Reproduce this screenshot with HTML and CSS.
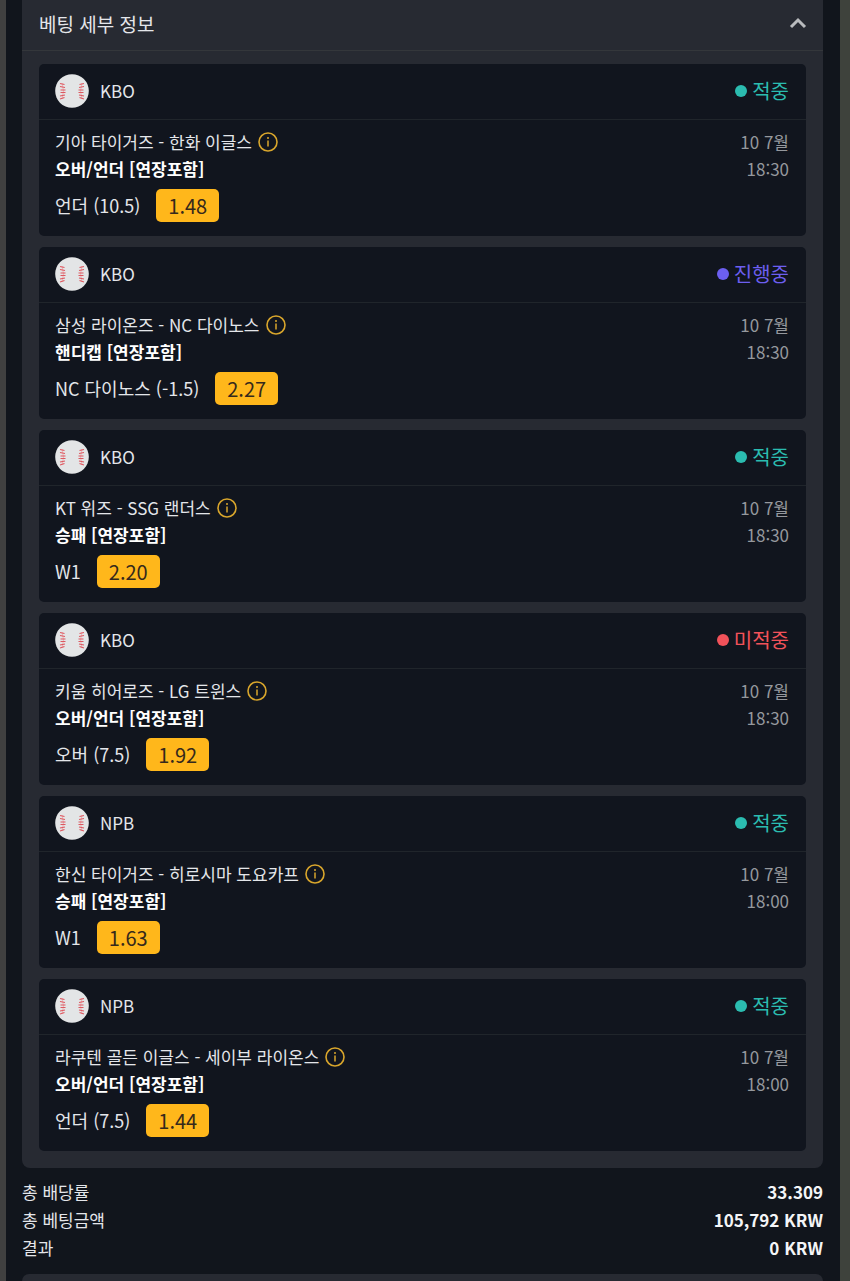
FILE: index.html
```
<!DOCTYPE html>
<html lang="ko">
<head>
  <meta charset="UTF-8" />
  <meta name="viewport" content="width=device-width, initial-scale=1.0"/>
  <title>베팅 세부 정보</title>
  <link rel="stylesheet" href="styles.css">
</head>
<body>
  <svg class="sprite" aria-hidden="true">
    <symbol id="ball" viewBox="0 0 34 34">
      <circle cx="17" cy="17" r="16.8" fill="#e3e5e6"/>
      <g fill="none" stroke="#f0b4b8" stroke-width="1">
        <path d="M7 9Q10 17 7 25M27 9Q24 17 27 25"/>
      </g>
      <g fill="none" stroke="#dc5960" stroke-width="1.2">
        <path d="M5 9.500l4.500 1M5 12.500l5 1M5.500 16h5M5.500 18.500h5M5 22l5-1M5 25l4.500-1.500"/>
        <path d="M29 9.500l-4.500 1M29 12.500l-5 1M28.500 16h-5M28.500 18.500h-5M29 22l-5-1M29 25l-4.500-1.500"/>
      </g>
    </symbol>
    <symbol id="info" viewBox="0 0 20 20">
      <circle cx="10" cy="10" r="9" fill="none" stroke="#d9a62c" stroke-width="1.600"/>
      <path d="M10 8.600v6" stroke="#d9a62c" stroke-width="1.500"/>
      <circle cx="10" cy="6" r="1" fill="#d9a62c"/>
    </symbol>
  </svg>

  <div class="sheet">
    <section class="panel">
      <button class="panel-toggle" type="button" aria-expanded="true" aria-controls="bets">
        <span>베팅 세부 정보</span>
        <svg class="chevron" viewBox="0 0 18 12" aria-hidden="true"><path d="M2 10l7-7 7 7"/></svg>
      </button>

      <div class="bets" id="bets">
        <article class="bet">
          <header class="bet-head">
            <svg class="ball" aria-hidden="true"><use href="#ball"/></svg>
            <span class="league">KBO</span>
            <span class="status won">적중</span>
          </header>
          <div class="bet-body">
            <div class="info">
              <div class="match">기아 타이거즈 - 한화 이글스
                <button class="info-btn" type="button" aria-label="경기 정보"><svg><use href="#info"/></svg></button>
              </div>
              <div class="market">오버/언더 [연장포함]</div>
              <div class="pick">언더 (10.5) <span class="odds">1.48</span></div>
            </div>
            <div class="date">10 7월<br>18:30</div>
          </div>
        </article>

        <article class="bet">
          <header class="bet-head">
            <svg class="ball" aria-hidden="true"><use href="#ball"/></svg>
            <span class="league">KBO</span>
            <span class="status live">진행중</span>
          </header>
          <div class="bet-body">
            <div class="info">
              <div class="match">삼성 라이온즈 - NC 다이노스
                <button class="info-btn" type="button" aria-label="경기 정보"><svg><use href="#info"/></svg></button>
              </div>
              <div class="market">핸디캡 [연장포함]</div>
              <div class="pick">NC 다이노스 (-1.5) <span class="odds">2.27</span></div>
            </div>
            <div class="date">10 7월<br>18:30</div>
          </div>
        </article>

        <article class="bet">
          <header class="bet-head">
            <svg class="ball" aria-hidden="true"><use href="#ball"/></svg>
            <span class="league">KBO</span>
            <span class="status won">적중</span>
          </header>
          <div class="bet-body">
            <div class="info">
              <div class="match">KT 위즈 - SSG 랜더스
                <button class="info-btn" type="button" aria-label="경기 정보"><svg><use href="#info"/></svg></button>
              </div>
              <div class="market">승패 [연장포함]</div>
              <div class="pick">W1 <span class="odds">2.20</span></div>
            </div>
            <div class="date">10 7월<br>18:30</div>
          </div>
        </article>

        <article class="bet">
          <header class="bet-head">
            <svg class="ball" aria-hidden="true"><use href="#ball"/></svg>
            <span class="league">KBO</span>
            <span class="status lost">미적중</span>
          </header>
          <div class="bet-body">
            <div class="info">
              <div class="match">키움 히어로즈 - LG 트윈스
                <button class="info-btn" type="button" aria-label="경기 정보"><svg><use href="#info"/></svg></button>
              </div>
              <div class="market">오버/언더 [연장포함]</div>
              <div class="pick">오버 (7.5) <span class="odds">1.92</span></div>
            </div>
            <div class="date">10 7월<br>18:30</div>
          </div>
        </article>

        <article class="bet">
          <header class="bet-head">
            <svg class="ball" aria-hidden="true"><use href="#ball"/></svg>
            <span class="league">NPB</span>
            <span class="status won">적중</span>
          </header>
          <div class="bet-body">
            <div class="info">
              <div class="match">한신 타이거즈 - 히로시마 도요카프
                <button class="info-btn" type="button" aria-label="경기 정보"><svg><use href="#info"/></svg></button>
              </div>
              <div class="market">승패 [연장포함]</div>
              <div class="pick">W1 <span class="odds">1.63</span></div>
            </div>
            <div class="date">10 7월<br>18:00</div>
          </div>
        </article>

        <article class="bet">
          <header class="bet-head">
            <svg class="ball" aria-hidden="true"><use href="#ball"/></svg>
            <span class="league">NPB</span>
            <span class="status won">적중</span>
          </header>
          <div class="bet-body">
            <div class="info">
              <div class="match">라쿠텐 골든 이글스 - 세이부 라이온스
                <button class="info-btn" type="button" aria-label="경기 정보"><svg><use href="#info"/></svg></button>
              </div>
              <div class="market">오버/언더 [연장포함]</div>
              <div class="pick">언더 (7.5) <span class="odds">1.44</span></div>
            </div>
            <div class="date">10 7월<br>18:00</div>
          </div>
        </article>
      </div>
    </section>

    <dl class="totals">
      <div class="total"><dt>총 배당률</dt><dd>33.309</dd></div>
      <div class="total"><dt>총 베팅금액</dt><dd>105,792 KRW</dd></div>
      <div class="total"><dt>결과</dt><dd>0 KRW</dd></div>
    </dl>

    <section class="next-panel"></section>
  </div>
</body>
</html>
```
FILE: styles.css
```
* {
  box-sizing: border-box;
  margin: 0;
  padding: 0;
}

body {
  background: #11151c;
  color: #e4e6ea;
  font-family: 'Noto Sans CJK KR', 'Noto Sans', sans-serif;
  font-size: 17px;
  line-height: 27px;
}

button {
  background: none;
  border: none;
  color: inherit;
  font: inherit;
  cursor: pointer;
}

.sprite {
  display: none;
}

.sheet {
  display: flex;
  flex-direction: column;
  min-height: 100vh;
  padding: 0 17px 0 16px;
  border-left: 6px solid #404040;
  border-right: 10px solid #3e423c;
}

.panel {
  background: #272a32;
  border-radius: 0 0 8px 8px;
}

.panel-toggle {
  display: flex;
  align-items: center;
  justify-content: space-between;
  width: 100%;
  height: 51px;
  padding: 0 16px 4px 17px;
  border-bottom: 1px solid #34373b;
  font-size: 19px;
}

.chevron {
  width: 18px;
  height: 12px;
  fill: none;
  stroke: #b9bbbe;
  stroke-width: 3;
}

.bets {
  display: flex;
  flex-direction: column;
  gap: 11px;
  padding: 13px 17px 17px;
}

.bet {
  background: #11151e;
  border-radius: 5px;
}

.bet-head {
  display: flex;
  align-items: center;
  gap: 11px;
  height: 56px;
  padding: 0 17px 2px 16px;
  border-bottom: 1px solid #20252b;
}

.ball {
  width: 34px;
  height: 34px;
}

.status {
  display: flex;
  align-items: center;
  gap: 5px;
  margin-left: auto;
  font-size: 20px;
}

.status::before {
  content: "";
  width: 12px;
  height: 12px;
  border-radius: 50%;
  background: currentColor;
}

.won { color: #2bbcb0; }
.live { color: #6c5ff0; }
.lost { color: #f2525a; }

.bet-body {
  display: flex;
  justify-content: space-between;
  padding: 8px 17px 14px 16px;
}

.match {
  display: flex;
  align-items: center;
  gap: 6px;
}

.info-btn,
.info-btn svg {
  display: block;
  width: 20px;
  height: 20px;
}

.market {
  color: #fff;
  font-weight: 700;
}

.pick {
  display: flex;
  align-items: center;
  gap: 16px;
  margin-top: 7px;
  font-size: 18px;
}

.odds {
  padding: 0 12px;
  border-radius: 5px;
  background: #ffb71b;
  color: #35291c;
  font-size: 20px;
  line-height: 33px;
}

.date {
  color: #95989d;
  text-align: right;
}

.totals {
  padding: 10px 0 12px;
}

.total {
  display: flex;
  justify-content: space-between;
  line-height: 28px;
}

.total dd {
  color: #f4f5f7;
  font-weight: 700;
}

.next-panel {
  flex: 1;
  background: #272a32;
  border-radius: 8px 8px 0 0;
}
```
